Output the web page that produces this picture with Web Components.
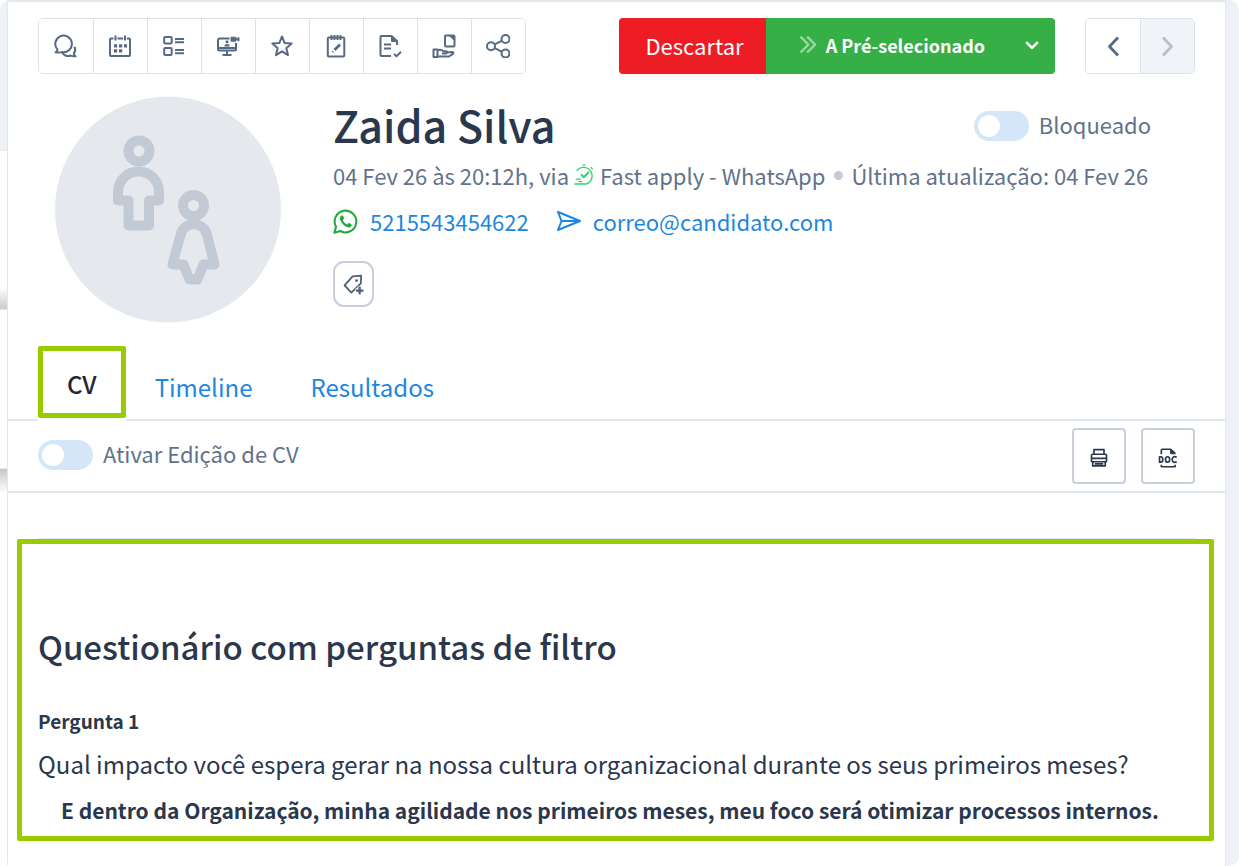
<!DOCTYPE html>
<html lang="pt">
<head>
<meta charset="utf-8">
<meta name="viewport" content="width=device-width, initial-scale=1">
<title>Zaida Silva</title>
<style>
    body {
        margin: 0;
        background: #fff;
        color: #2a374d;
        font-family: "Noto Sans CJK SC", "Noto Sans", sans-serif;
        font-size: 22px;
        --line: #e3e8ee;
        --rail: #eef2f6;
        --muted: #61728a;
        --link: #1d87e0;
        --mark: #99cc00;
    }
</style>
</head>
<body>
<page-shell>
    <action-bar></action-bar>
    <candidate-profile name="Zaida Silva" phone="5215543454622" email="correo@candidato.com">
        <toggle-switch slot="status">Bloqueado</toggle-switch>
        <span slot="applied">04 Fev 26 às 20:12h, via</span>
        <span slot="source">Fast apply - WhatsApp</span>
        <span slot="updated">Última atualização: 04 Fev 26</span>
    </candidate-profile>
    <tab-bar>
        <tab-link active>CV</tab-link>
        <tab-link>Timeline</tab-link>
        <tab-link>Resultados</tab-link>
    </tab-bar>
    <cv-toolbar>
        <toggle-switch>Ativar Edição de CV</toggle-switch>
    </cv-toolbar>
    <question-panel>
        <span slot="title">Questionário com perguntas de filtro</span>
        <question-item>
            <span slot="label">Pergunta 1</span>
            <span slot="question">Qual impacto você espera gerar na nossa cultura organizacional durante os seus primeiros meses?</span>
            <span slot="answer">E dentro da Organização, minha agilidade nos primeiros meses, meu foco será otimizar processos internos.</span>
        </question-item>
    </question-panel>
</page-shell>

<script>
const ICONS = {
    chat: '<path d="M1.500 18.300c1.400-.6 2-1.500 2-2.700a8.300 8.300 0 1 1 4.500 2.500c-2 .6-4 .4-6.500.2z"/><path d="M8.300 18.500c1.600 3.200 5 4.300 8.300 3 1.500.9 3 1 5 .8-1.400-.8-1.900-2-1.600-3.200 1.400-1.900 1.500-4.300.4-6.400"/>',
    calendar: '<rect x="2" y="4.500" width="20" height="17.500" rx="1"/><path d="M7.500 1.500v6M17 1.500v6" stroke="#fff" stroke-width="4"/><path d="M7.500 1.500v5M17 1.500v5"/><path d="M6 11.800h3.200M11 11.800h3.200M16 11.800h3M6 16.800h3.200M11 16.800h3.200" stroke-width="3.200"/>',
    list: '<rect x="2.200" y="3" width="7.500" height="6.500" rx="1"/><rect x="2.200" y="14" width="7.500" height="7" rx="1"/><path d="M13 5h9M13 8.200h9M13 16h9M13 19.200h9"/>',
    monitor: '<path d="M13.500 4.500H4a2 2 0 0 0-2 2V15a1.500 1.500 0 0 0 1.500 1.500h15A1.500 1.500 0 0 0 20 15V9M2 14h18M11 17v4M6.500 21h9"/><path d="M15 3.200h5v4h-5zM20 5.200l3-1.800v3.600z" fill="currentColor" stroke-width="1"/><circle cx="11" cy="7.800" r="1.500" fill="currentColor" stroke="none"/><path d="M8.300 12.500c0-3.200 5.400-3.200 5.400 0z" fill="currentColor" stroke="none"/>',
    star: '<path d="M12 2.500l2.700 6.600 7 .5-5.400 4.600 1.700 6.900-6-3.800-6 3.800 1.700-6.900-5.400-4.600 7-.5z"/>',
    notes: '<rect x="3.800" y="3.500" width="16.500" height="19" rx="1"/><path d="M7.500 1v5M10.500 1v5M13.500 1v5M16.500 1v5"/><path d="M10.500 16l5.500-5.500" stroke-width="2.800"/><path d="M8.500 18.200l.8-.8"/>',
    docCheck: '<path d="M19 11V7l-5.500-5H3.500a1 1 0 0 0-1 1v18a1 1 0 0 0 1 1H13M6 10.500h7M6 14.500h7"/><path d="M13.500 2v5.500H19z" fill="currentColor" stroke-width="1"/><path d="M16 20l2.500 2.200 4.500-4.500"/>',
    handBox: '<rect x="13" y="1.500" width="9.500" height="11" rx="1"/><path d="M17.500 2h4.500v4z" fill="currentColor" stroke-width="1"/><rect x="1.500" y="15.500" width="4" height="7.500"/><path d="M5.500 16.500c2-1.200 4-.9 6 .7h2.700c1.300 0 1.300 2.300 0 2.300H10M14.500 18.500l6-.5c1.300 0 1 1.500 0 2.200l-3.500 2.300H5.500"/>',
    share: '<circle cx="5" cy="12.200" r="4"/><circle cx="19.500" cy="5" r="4"/><circle cx="19.500" cy="19.500" r="4"/><path d="M8.600 10.300l7.200-3.500M8.600 14.100l7.200 3.500"/>',
    left: '<path d="M17 3.500L8.500 12.500l8.500 9" stroke-width="2.800"/>',
    right: '<path d="M8 3.500l8.500 9L8 21.500" stroke-width="2.800"/>',
    down: '<path d="M5 8.500l7 7 7-7" stroke-width="3"/>',
    forward: '<path d="M3 2l9.500 9.500L3 21M11 2l9.500 9.500L11 21" stroke-width="2.800"/>',
    tag: '<path d="M9.500 21.200L1.800 13L11 2.800l9.700-1-.3 9z"/><circle cx="15.500" cy="7.500" r="1.600" fill="currentColor" stroke="none"/><path d="M19 14.200v9.300M14.400 18.900h9.200" stroke="#fff" stroke-width="5"/><path d="M19 14.700v8.500M14.800 18.900h8.500" stroke-width="2.600"/>',
    send: '<path d="M1 3l22 9-22 9 3.500-9zM4.500 12H22"/>',
    whatsapp: '<path d="M1.300 22.800l1.600-5.700a10.400 10.400 0 1 1 4 4z"/><path d="M8.300 6.200c-1.600.8-2.200 2.500-1.400 4.300 1.500 3.500 3.800 5.900 7.200 7.100 1.800.6 3.900-.7 4-2.600l-3-1.700-1.500 1.500c-2-.9-3.300-2.300-4.200-4.100l1.300-1.500-1.100-2.900z" fill="currentColor" stroke="none"/>',
    fast: '<path d="M4 7.500A9.300 9.300 0 1 1 14.500 21.800H1.500M3 16.500h5.500M6 19.200h4M10.500 1.200h3M19.500 3.500l2 2"/><path d="M8.800 11.500l3 3 5.500-5.800" stroke-width="2.200"/>',
    print: '<path d="M6 7.500V2h12v5.500M4.500 7.500h15a1.500 1.500 0 0 1 1.500 2v3H3v-3a1.500 1.500 0 0 1 1.500-2zM3 12.500v4h18v-4M4.500 16.500v5h15v-5M7 19h10"/>',
    doc: '<path d="M4 7.500V2.500a1 1 0 0 1 1-1h10l5.500 5M4 20v2.500h16.500V20"/><path d="M15 1.500v5.500h6z" fill="currentColor" stroke-width="1"/><path d="M1.800 10.500v6.500h1.500c3.300 0 3.300-6.500 0-6.500zM22.500 11c-4-1.800-5.500.500-5.500 2.800s1.500 4.500 5.500 2.700"/><ellipse cx="11.500" cy="13.700" rx="2.500" ry="3.200"/>',
};

class UiIcon extends HTMLElement {
    constructor() {
        super();
        this.attachShadow({ mode: 'open' });
    }

    connectedCallback() {
        const size = this.getAttribute('size') || '24';
        const weight = this.getAttribute('weight') || '2';
        this.shadowRoot.innerHTML = `
        <style>
            :host { display: inline-flex; flex: none; }
            svg { display: block; }
        </style>
        <svg width="${size}" height="${size}" viewBox="0 0 24 24" fill="none" stroke="currentColor"
            stroke-width="${weight}" stroke-linejoin="round" aria-hidden="true">${ICONS[this.getAttribute('name')]}</svg>
        `;
    }
}

class PageShell extends HTMLElement {
    constructor() {
        super();
        this.attachShadow({ mode: 'open' }).innerHTML = `
        <style>
            :host {
                display: grid;
                grid-template-columns: 7px 1fr 13px;
                min-height: 100vh;
                border-radius: 10px;
                overflow: hidden;
                background: var(--rail);
            }
            .rail { display: flex; flex-direction: column; background: #fff; }
            .rail div { box-sizing: border-box; border-bottom: 1px solid var(--line); }
            .top { height: 151px; background: var(--rail); }
            .card { height: 159px; background: linear-gradient(transparent 86%, #ccc); }
            .plain { height: 159px; }
            .rail .shade { height: 24px; border: 0; background: linear-gradient(#c8c8c8, #fff); }
            main {
                min-width: 0;
                background: #fff;
                border: solid var(--line);
                border-width: 2px 1px 0;
            }
        </style>
        <div class="rail"><div class="top"></div><div class="card"></div><div class="plain"></div><div class="shade"></div></div>
        <main><slot></slot></main>
        `;
    }
}

class ActionBar extends HTMLElement {
    constructor() {
        super();
        const tools = [
            ['chat', 'Mensagens'], ['calendar', 'Agenda'], ['list', 'Testes'], ['monitor', 'Entrevista'],
            ['star', 'Favorito'], ['notes', 'Notas'], ['docCheck', 'Documentos'], ['handBox', 'Entregar'], ['share', 'Partilhar']
        ];
        this.attachShadow({ mode: 'open' }).innerHTML = `
        <style>
            :host { display: flex; align-items: flex-start; padding: 16px 30px 0; }
            button { font: inherit; border: 0; padding: 0; cursor: pointer; }
            .group {
                display: flex;
                border: 1px solid #dce2e9;
                border-radius: 5px;
                overflow: hidden;
            }
            .group button {
                display: flex; align-items: center; justify-content: center;
                width: 54px; height: 54px;
                background: #fff;
                color: #566a84;
            }
            .group button + button { box-shadow: inset 1px 0 #dce2e9; }
            .group button:disabled { background: #f0f3f7; color: #b5c0ce; }
            .stage {
                display: flex;
                height: 56px;
                margin: 0 30px 0 auto;
                border-radius: 4px;
                overflow: hidden;
            }
            .stage button { display: flex; align-items: center; padding-bottom: 2px; color: #fff; }
            .discard { padding: 0 22px 0 26px; background: #ee1c25; font-size: 22px; }
            .move { padding-left: 32px; gap: 8px; background: #37af47; font-size: 18px; font-weight: 700; }
            .move ui-icon { opacity: .5; }
            .more { padding: 0 13px 0 37px; background: #37af47; }
        </style>
        <div class="group">${tools.map(([icon, label]) => `<button aria-label="${label}"><ui-icon name="${icon}"></ui-icon></button>`).join('')}</div>
        <div class="stage">
            <button class="discard">Descartar</button>
            <button class="move"><ui-icon name="forward" size="20"></ui-icon>A Pré-selecionado</button>
            <button class="more" aria-label="Mais opções"><ui-icon name="down" size="20"></ui-icon></button>
        </div>
        <div class="group">
            <button aria-label="Anterior"><ui-icon name="left"></ui-icon></button>
            <button aria-label="Seguinte" disabled><ui-icon name="right"></ui-icon></button>
        </div>
        `;
    }
}

class ToggleSwitch extends HTMLElement {
    constructor() {
        super();
        this.attachShadow({ mode: 'open' }).innerHTML = `
        <style>
            :host { display: inline-flex; color: var(--muted); font-size: 22px; line-height: 34px; }
            label { display: flex; align-items: center; gap: 10px; cursor: pointer; }
            input {
                appearance: none;
                width: 55px; height: 30px;
                margin: 4px 0 0; padding: 4px;
                box-sizing: border-box;
                border-radius: 15px;
                background: #d3e7f8;
            }
            input::before {
                content: "";
                display: block;
                width: 22px; height: 22px;
                border-radius: 50%;
                background: #fff;
            }
            input:checked { background: var(--link); }
            input:checked::before { margin-left: 25px; }
        </style>
        <label><input type="checkbox"><slot></slot></label>
        `;
    }
}

class CandidateProfile extends HTMLElement {
    constructor() {
        super();
        const name = this.getAttribute('name');
        const phone = this.getAttribute('phone');
        const email = this.getAttribute('email');
        this.attachShadow({ mode: 'open' }).innerHTML = `
        <style>
            :host { display: flex; align-items: flex-start; padding: 22px 30px 0 47px; }
            .avatar { flex: none; width: 226px; height: 227px; margin-right: 52px; }
            .info { flex: 1; min-width: 0; }
            .head { display: flex; justify-content: space-between; align-items: center; padding-right: 44px; }
            h1 { margin: 0; font-size: 43px; line-height: 56px; font-weight: 500; }
            .meta, .contact { display: flex; align-items: center; line-height: 34px; white-space: nowrap; }
            .meta { margin-top: 6px; color: var(--muted); font-size: 22px; }
            .meta ui-icon { margin: 0 5px 0 4px; color: #2fd36b; }
            .dot { width: 9px; height: 9px; margin: 0 8px 0 9px; border-radius: 50%; background: #c3ccd7; }
            .contact { margin-top: 12px; font-size: 22px; }
            a { display: flex; align-items: center; gap: 12px; color: var(--link); text-decoration: none; }
            a + a { margin-left: 28px; }
            .wa { color: #25a840; }
            .tag {
                display: flex; align-items: center; justify-content: center;
                width: 41px; height: 46px;
                margin-top: 23px; padding: 0;
                border: 2px solid #c6cfda;
                border-radius: 11px;
                background: #fff;
                color: #4d5f78;
            }
        </style>
        <svg class="avatar" viewBox="0 0 226 227" aria-hidden="true">
            <circle cx="113" cy="113.500" r="113" fill="#e5e9ee"/>
            <g fill="none" stroke="#c2cad5" stroke-width="10" stroke-linejoin="round">
                <circle cx="84" cy="55" r="10.500"/>
                <circle cx="138.500" cy="109.500" r="10.500"/>
                <path d="M63 104V96a20.500 20.500 0 0 1 41 0v8.500h-10v25H73.500v-25H63z"/>
                <path d="M125.500 139c3-14.500 23-14.500 26.500 0l7.500 29.500h-11l-6 15h-8l-6-15h-11z"/>
            </g>
        </svg>
        <div class="info">
            <div class="head"><h1>${name}</h1><slot name="status"></slot></div>
            <div class="meta">
                <slot name="applied"></slot><ui-icon name="fast" size="22" weight="1.5"></ui-icon><slot name="source"></slot>
                <span class="dot"></span><slot name="updated"></slot>
            </div>
            <div class="contact">
                <a href="tel:${phone}"><ui-icon class="wa" name="whatsapp" size="25"></ui-icon>${phone}</a>
                <a href="mailto:${email}"><ui-icon name="send"></ui-icon>${email}</a>
            </div>
            <button class="tag" aria-label="Adicionar etiqueta"><ui-icon name="tag" size="21"></ui-icon></button>
        </div>
        `;
    }
}

class TabBar extends HTMLElement {
    constructor() {
        super();
        this.attachShadow({ mode: 'open' }).innerHTML = `
        <style>
            :host { display: block; margin-top: 23px; }
            nav { display: flex; height: 73px; padding: 0 30px; border-bottom: 2px solid var(--line); }
        </style>
        <nav><slot></slot></nav>
        `;
    }
}

class TabLink extends HTMLElement {
    constructor() {
        super();
        this.attachShadow({ mode: 'open' }).innerHTML = `
        <style>
            :host { display: block; }
            a {
                display: block;
                padding: 24px 29px;
                color: var(--link);
                font-size: 24px;
                line-height: 34px;
                text-decoration: none;
            }
            /* the current tab covers the line under the bar */
            :host([active]) { height: 75px; background: #fff; }
            :host([active]) a {
                padding: 16px 24px 12px;
                border: 5px solid var(--mark);
                border-radius: 2px;
                color: #1d2739;
                font-weight: 500;
            }
        </style>
        <a href="#"><slot></slot></a>
        `;
    }
}

class CvToolbar extends HTMLElement {
    constructor() {
        super();
        this.attachShadow({ mode: 'open' }).innerHTML = `
        <style>
            :host {
                display: flex; align-items: center; gap: 15px;
                padding: 7px 30px;
                border-bottom: 2px solid var(--line);
            }
            slot { display: block; margin-right: auto; }
            button {
                display: flex; align-items: center; justify-content: center;
                width: 54px; height: 56px;
                padding: 4px 0 0;
                border: 2px solid #c6cfda;
                border-radius: 4px;
                background: #fff;
                color: #2a374d;
            }
        </style>
        <slot></slot>
        <button aria-label="Imprimir"><ui-icon name="print" size="20"></ui-icon></button>
        <button aria-label="Exportar DOC"><ui-icon name="doc" size="20"></ui-icon></button>
        `;
    }
}

class QuestionPanel extends HTMLElement {
    constructor() {
        super();
        this.attachShadow({ mode: 'open' }).innerHTML = `
        <style>
            :host { display: block; padding-top: 45px; }
            hr { margin: 0 30px; border: 0; border-top: 1px solid var(--line); }
            section {
                margin: 0 11px 0 9px;
                padding: 78px 16px 6px;
                border: 5px solid var(--mark);
                border-radius: 2px;
            }
            h2 { margin: 0 0 37px; font-size: 33px; line-height: 48px; font-weight: 500; }
        </style>
        <hr>
        <section><h2><slot name="title"></slot></h2><slot></slot></section>
        `;
    }
}

class QuestionItem extends HTMLElement {
    constructor() {
        super();
        this.attachShadow({ mode: 'open' }).innerHTML = `
        <style>
            :host { display: block; }
            h3 { margin: 0; font-size: 19px; line-height: 28px; font-weight: 700; }
            p { margin: 9px 0 0; font-size: 24px; line-height: 40px; }
            .answer { margin-top: 6px; padding-left: 23px; font-size: 21px; font-weight: 700; }
        </style>
        <h3><slot name="label"></slot></h3>
        <p><slot name="question"></slot></p>
        <p class="answer"><slot name="answer"></slot></p>
        `;
    }
}

customElements.define('ui-icon', UiIcon);
customElements.define('page-shell', PageShell);
customElements.define('action-bar', ActionBar);
customElements.define('toggle-switch', ToggleSwitch);
customElements.define('candidate-profile', CandidateProfile);
customElements.define('tab-bar', TabBar);
customElements.define('tab-link', TabLink);
customElements.define('cv-toolbar', CvToolbar);
customElements.define('question-panel', QuestionPanel);
customElements.define('question-item', QuestionItem);
</script>
</body>
</html>
